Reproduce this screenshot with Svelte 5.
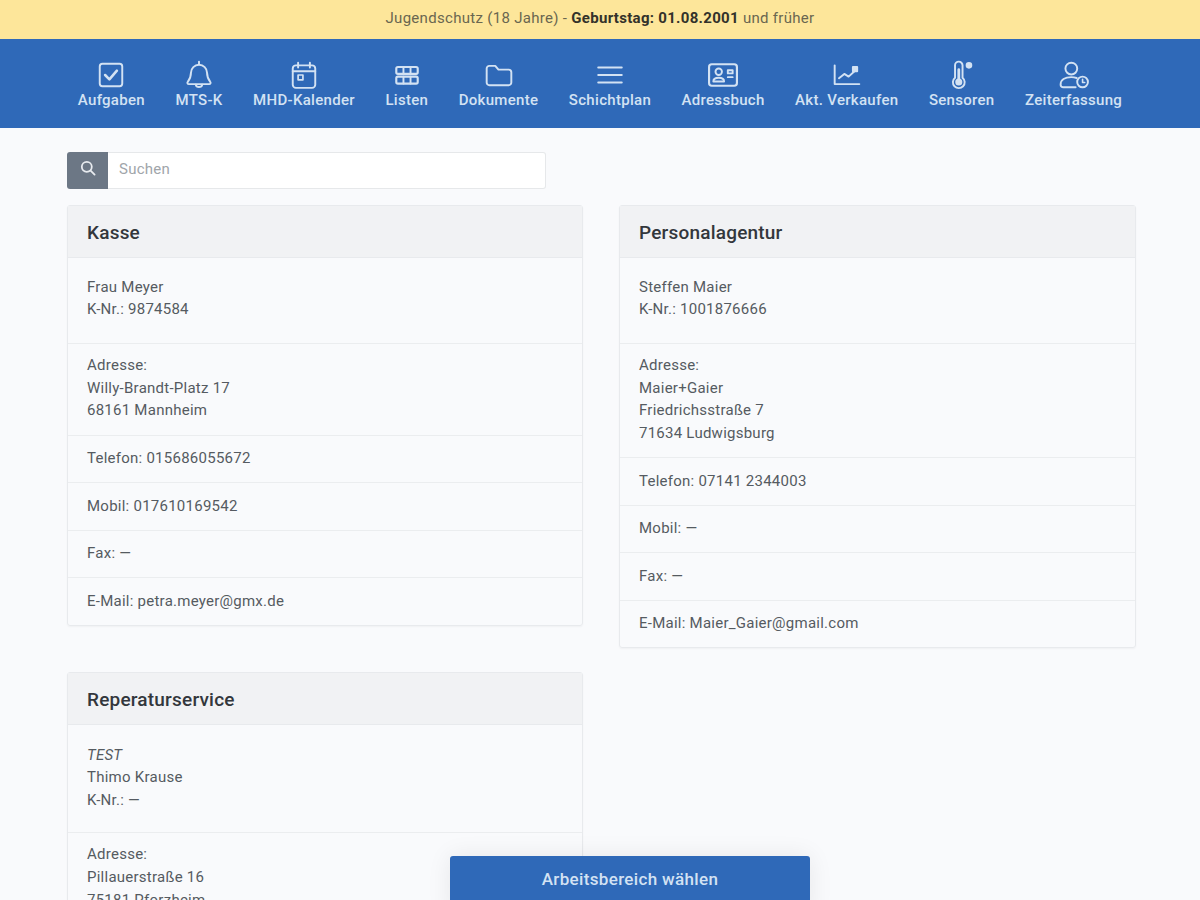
<script>
  const navItems = [
    { label: 'Aufgaben', icon: 'check' },
    { label: 'MTS-K', icon: 'bell' },
    { label: 'MHD-Kalender', icon: 'calendar' },
    { label: 'Listen', icon: 'list' },
    { label: 'Dokumente', icon: 'folder' },
    { label: 'Schichtplan', icon: 'bars' },
    { label: 'Adressbuch', icon: 'contact' },
    { label: 'Akt. Verkaufen', icon: 'chart' },
    { label: 'Sensoren', icon: 'thermo' },
    { label: 'Zeiterfassung', icon: 'userclock' }
  ];

  const left = [
    {
      title: 'Kasse',
      intro: ['Frau Meyer', 'K-Nr.: 9874584'],
      address: ['Willy-Brandt-Platz 17', '68161 Mannheim'],
      phone: '015686055672',
      mobile: '017610169542',
      fax: '—',
      email: 'petra.meyer@gmx.de'
    },
    {
      title: 'Reperaturservice',
      note: 'TEST',
      intro: ['Thimo Krause', 'K-Nr.: —'],
      address: ['Pillauerstraße 16', '75181 Pforzheim'],
      phone: '—',
      mobile: '—',
      fax: '—',
      email: '—'
    }
  ];

  const right = [
    {
      title: 'Personalagentur',
      intro: ['Steffen Maier', 'K-Nr.: 1001876666'],
      address: ['Maier+Gaier', 'Friedrichsstraße 7', '71634 Ludwigsburg'],
      phone: '07141 2344003',
      mobile: '—',
      fax: '—',
      email: 'Maier_Gaier@gmail.com'
    }
  ];
</script>

{#snippet card(c)}
  <section class="card">
    <h2>{c.title}</h2>
    <div class="row first" class:noted={c.note}>
      {#if c.note}<em>{c.note}</em><br />{/if}
      {#each c.intro as line}{line}<br />{/each}
    </div>
    <div class="row address">
      Adresse:<br />
      {#each c.address as line}{line}<br />{/each}
    </div>
    <div class="row">Telefon: {c.phone}</div>
    <div class="row">Mobil: {c.mobile}</div>
    <div class="row">Fax: {c.fax}</div>
    <div class="row">E-Mail: {c.email}</div>
  </section>
{/snippet}

<div class="page">
  <div class="banner">Jugendschutz (18 Jahre) - <b>Geburtstag: 01.08.2001</b> und früher</div>

  <nav>
    {#each navItems as item}
      <a href="#{item.icon}">
        <svg viewBox="0 0 28 28" width="30" height="30" fill="none" stroke="currentColor" stroke-width="1.800" stroke-linecap="round" stroke-linejoin="round">
          {#if item.icon === 'check'}
            <rect x="3.500" y="3.500" width="21" height="21" rx="2.500" />
            <path d="M8.500 14l4 4 7-8" stroke-width="2.400" />
          {:else if item.icon === 'bell'}
            <path d="M14 1.500v2M6.500 12a7.500 7.500 0 0 1 15 0c0 4.500 1 6 3 8.500.7.800.2 2-1 2H4.500c-1.200 0-1.700-1.200-1-2 2-2.500 3-4 3-8.500z" />
            <path d="M11 23c.5 3 5.500 3 6 0" />
          {:else if item.icon === 'calendar'}
            <rect x="3.500" y="5" width="21" height="21" rx="3" />
            <path d="M3.500 10.500h21M8.500 2.500v4.500M19.500 2.500v4.500" />
            <rect x="8.500" y="14" width="4.500" height="4.500" stroke-width="1.600" />
          {:else if item.icon === 'list'}
            <rect x="4" y="6.500" width="20" height="6.500" rx="1.500" stroke-width="2" />
            <rect x="4" y="15.500" width="20" height="6.500" rx="1.500" stroke-width="2" />
            <path d="M10.700 6.500v6.500M17.300 6.500v6.500M10.700 15.500v6.500M17.300 15.500v6.500" stroke-width="1.800" />
          {:else if item.icon === 'folder'}
            <path d="M2.500 8a2.500 2.500 0 0 1 2.500-2.500h5.500l3 3.500h9.500a2.500 2.500 0 0 1 2.500 2.500v9.500a2.500 2.500 0 0 1-2.500 2.500H5a2.500 2.500 0 0 1-2.500-2.500z" />
          {:else if item.icon === 'bars'}
            <path d="M3 7h22M3 14h22M3 21h22" />
          {:else if item.icon === 'contact'}
            <rect x="1" y="4" width="26" height="20" rx="2.500" stroke-width="2" />
            <circle cx="10" cy="11" r="3" />
            <path d="M5 20c0-4.500 10-4.500 10 0zM18.500 9.500h4.500v3h-4.500zM18.500 16h4.500" />
          {:else if item.icon === 'chart'}
            <path d="M2.500 5v17.500h23" />
            <path d="M6.500 17l5-4 4 2.500 6-5.500" />
            <rect x="19.500" y="6.500" width="4" height="4" fill="currentColor" />
          {:else if item.icon === 'thermo'}
            <path d="M7.500 5a3.500 3.500 0 0 1 7 0v11.500a5.500 5.500 0 1 1-7 0z" />
            <path d="M11 9v10" stroke-width="2.600" />
            <circle cx="11" cy="20.500" r="2.400" fill="currentColor" />
            <circle cx="20.500" cy="5" r="2.200" fill="currentColor" />
          {:else}
            <circle cx="11.500" cy="8" r="5.500" />
            <path d="M15.500 25.500H4c-1.500 0-2.500-1-2.500-2.500 0-4.500 4-7 10-7 2 0 3.500.3 5 .8" />
            <circle cx="22" cy="20.500" r="5" />
            <path d="M22 18v3h2" stroke-width="1.500" />
          {/if}
        </svg>
        <span>{item.label}</span>
      </a>
    {/each}
  </nav>

  <main>
    <div class="search">
      <span class="search-icon">
        <svg viewBox="0 0 16 16" width="16" height="16" fill="none" stroke="currentColor" stroke-width="1.800" stroke-linecap="round">
          <circle cx="6.800" cy="6.800" r="5" />
          <path d="M10.600 10.600l4 4" />
        </svg>
      </span>
      <input type="text" placeholder="Suchen" />
    </div>

    <div class="columns">
      <div class="col">
        {#each left as c}{@render card(c)}{/each}
      </div>
      <div class="col">
        {#each right as c}{@render card(c)}{/each}
      </div>
    </div>
  </main>

  <button class="workspace">Arbeitsbereich wählen</button>
</div>

<style>
  :global(body) {
    background: #f9fafc;
    font-family: Roboto, "Liberation Sans", sans-serif;
    color: #555b61;
  }

  .page {
    height: 900px;
    overflow: hidden;
    position: relative;
  }

  .banner {
    height: 39px;
    box-sizing: border-box;
    padding-top: 8px;
    background: #fde69a;
    color: #6a6650;
    font-size: 15px;
    letter-spacing: 0.3px;
    line-height: 20px;
    text-align: center;
  }

  .banner b {
    color: #33322a;
    font-weight: 700;
  }

  nav {
    height: 89px;
    background: #2f69b8;
    display: flex;
    justify-content: center;
    gap: 30.500px;
    padding-top: 21px;
    box-sizing: border-box;
  }

  nav a {
    display: flex;
    flex-direction: column;
    align-items: center;
    color: #d3e2f3;
    text-decoration: none;
    font-size: 15px;
    letter-spacing: 0.3px;
    font-weight: 500;
    line-height: 20px;
  }

  main {
    padding: 24px 64px 0 67px;
  }

  .search {
    display: flex;
    width: 479px;
    height: 37px;
    margin-bottom: 16px;
  }

  .search-icon {
    width: 41px;
    background: #6c7785;
    color: #e8ebef;
    border-radius: 3px 0 0 3px;
    display: flex;
    justify-content: center;
    padding-top: 8px;
    box-sizing: border-box;
  }

  input {
    flex: 1;
    min-width: 0;
    border: 1px solid #e6e8ea;
    border-left: none;
    background: #fff;
    padding: 0 11px 3px;
    font: inherit;
    font-size: 15px;
    letter-spacing: 0.25px;
    outline: none;
    border-radius: 0 3px 3px 0;
  }

  input::placeholder {
    color: #a0a5aa;
  }

  .columns {
    display: grid;
    grid-template-columns: 516px 517px;
    gap: 36px;
    align-items: start;
  }

  .col {
    display: flex;
    flex-direction: column;
    gap: 46px;
  }

  .card {
    border: 1px solid #e8eaed;
    border-radius: 3px;
    box-shadow: 0 1px 2px rgba(0, 0, 0, 0.04);
    font-size: 15px;
    letter-spacing: 0.25px;
    line-height: 22.700px;
  }

  h2 {
    margin: 0;
    height: 51px;
    padding: 0 19px;
    background: #f1f2f4;
    border-bottom: 1px solid #e8eaed;
    color: #33373c;
    font-size: 19px;
    letter-spacing: 0.2px;
    font-weight: 500;
    line-height: 53px;
  }

  .row {
    padding: 11.400px 19px 12.400px;
    border-bottom: 1px solid #ebedef;
  }

  .row:last-child {
    border-bottom: none;
  }

  .first {
    padding: 17.600px 19px 22px;
  }

  .noted {
    padding: 19px 19px 20.600px;
  }

  .address {
    padding: 10px 19px 12.600px;
  }

  .workspace {
    position: absolute;
    left: 450px;
    top: 856px;
    width: 360px;
    height: 60px;
    padding-bottom: 16px;
    border: none;
    border-radius: 3px;
    background: #2f69b8;
    color: #d3e2f3;
    font: 500 17px Roboto, sans-serif;
    letter-spacing: 0.35px;
    box-shadow: 0 0 24px rgba(0, 0, 0, 0.08);
  }
</style>
